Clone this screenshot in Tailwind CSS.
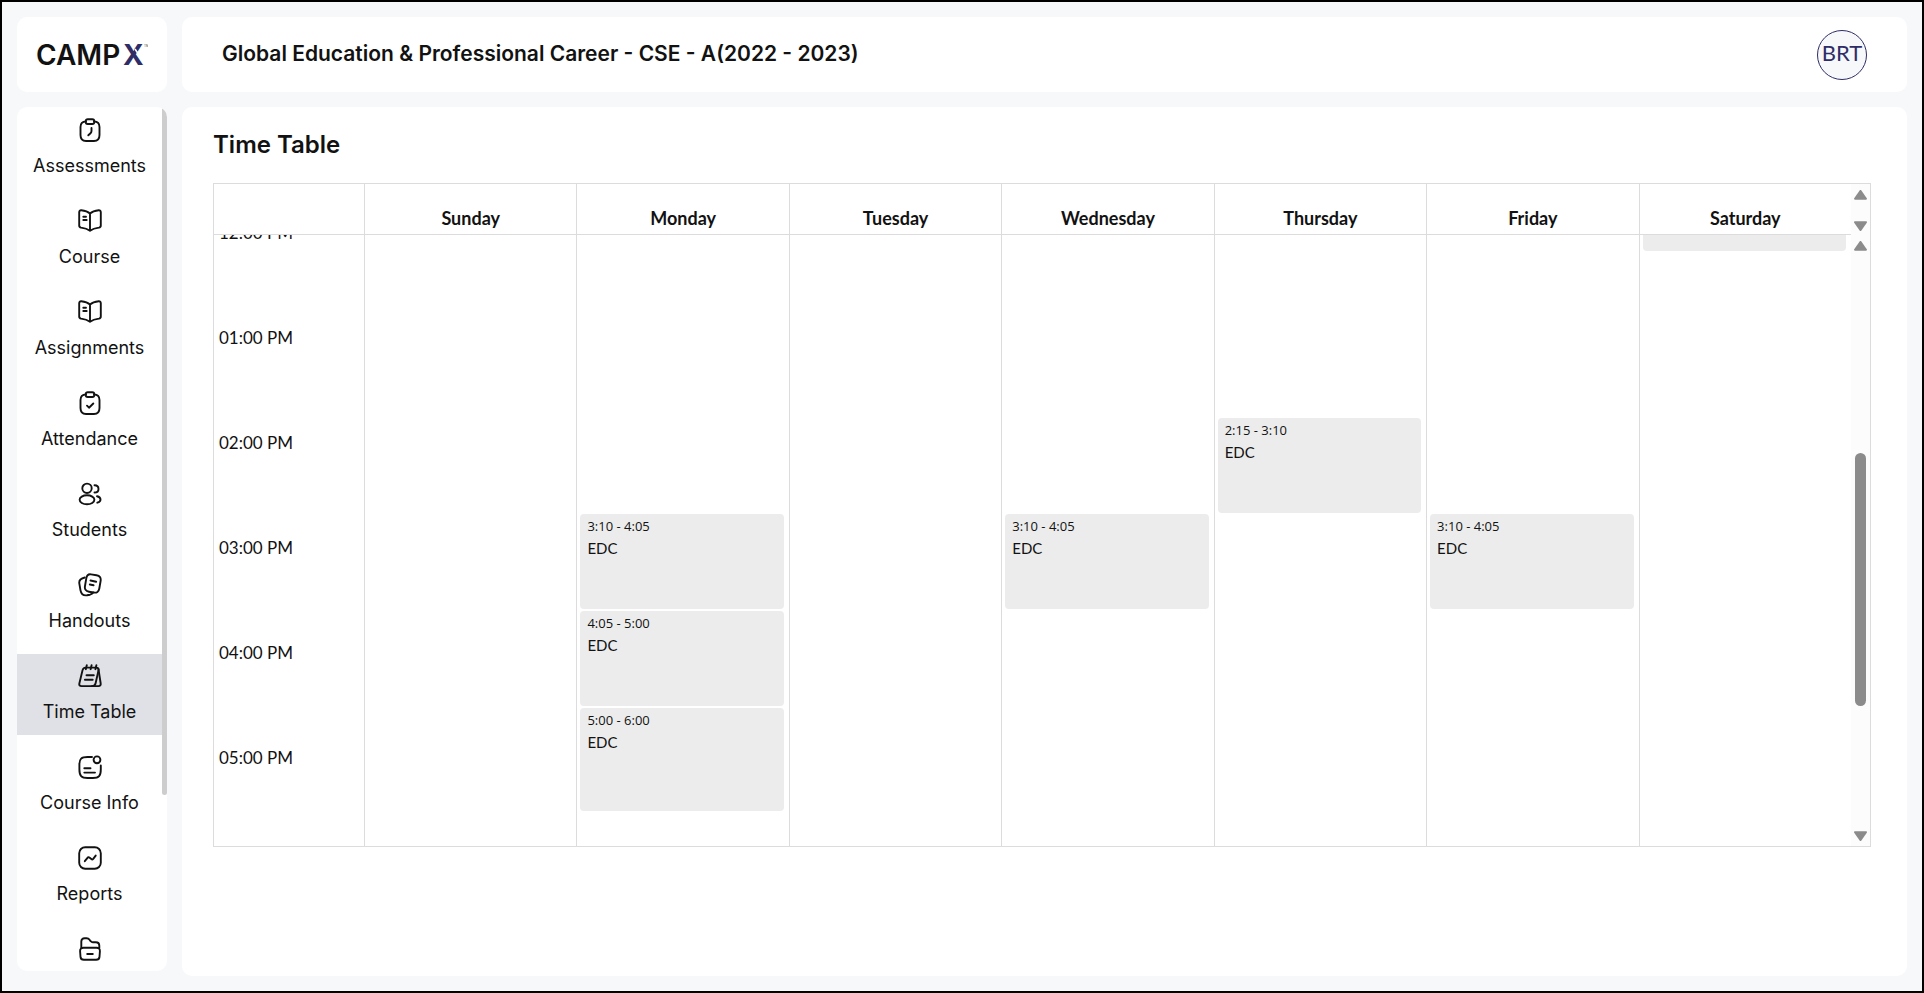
<!DOCTYPE html>
<html lang="en">
<head>
  <meta charset="UTF-8" />
  <meta name="viewport" content="width=device-width, initial-scale=1.0" />
  <title>CampX - Time Table</title>
  <script src="https://cdn.jsdelivr.net/npm/@tailwindcss/browser@4"></script>
</head>
<body class="h-screen flex flex-col gap-[15px] p-[15px] border-2 border-black bg-[#f7f8fa] text-[#121212] font-['Inter',sans-serif] overflow-hidden">

  <header class="flex gap-[15px] h-[75px] shrink-0">
    <a href="#" aria-label="CampX home" class="w-[150px] shrink-0 bg-white rounded-[10px] flex items-center justify-center">
      <svg class="w-28 h-11" viewBox="0 0 112 44" font-family="Inter, sans-serif" font-size="28" font-weight="600">
        <text x="0" y="32" fill="#121212">CAMP</text>
        <text x="87" y="32" fill="#2f2d68" font-weight="700">X</text>
        <path d="M99 16l8 12" stroke="#fff" stroke-width="1.5" />
        <text x="108" y="14" font-size="3" fill="#777">TM</text>
      </svg>
    </a>
    <div class="flex-1 min-w-0 bg-white rounded-[10px] px-10 flex items-center justify-between">
      <h1 class="text-[21px] leading-7 pb-0.5 font-semibold truncate">Global Education &amp; Professional Career - CSE - A(2022 - 2023)</h1>
      <button type="button" class="size-[50px] shrink-0 rounded-full border border-[#2f2d68] bg-[#f7f8fa] text-[#2f2d68] text-[22px] leading-6 pb-1 font-['Lato',sans-serif] flex items-center justify-center">BRT</button>
    </div>
  </header>

  <div class="flex-1 min-h-0 flex gap-[15px]">
    <aside class="w-[150px] shrink-0 mb-[5px] bg-white rounded-[10px] overflow-hidden flex">
      <nav class="flex-1 min-w-0 overflow-hidden flex flex-col gap-2.5 pt-px text-lg leading-[27px] whitespace-nowrap">
        <a href="#" class="h-[81px] shrink-0 pt-2.5 flex flex-col items-center gap-2.5">
          <svg class="size-6" viewBox="0 0 24 24" fill="none" stroke="currentColor" stroke-width="1.9" stroke-linecap="round" stroke-linejoin="round">
            <path d="M8 3.400C4.200 3.600 2.500 5 2.500 9v8c0 4.200 1.600 6 5.500 6h8c3.900 0 5.500-1.800 5.500-6V9c0-4-1.700-5.400-5.500-5.600" />
            <rect x="7.700" y="1.200" width="8.600" height="4.800" rx="2" />
            <path d="M13.500 10v3c0 1-.3 1.600-1 2.300L10.300 17.300" />
          </svg>
          Assessments
        </a>
        <a href="#" class="h-[81px] shrink-0 pt-2.5 flex flex-col items-center gap-2.5">
          <svg class="size-6" viewBox="0 0 24 24" fill="none" stroke="currentColor" stroke-width="1.9" stroke-linecap="round" stroke-linejoin="round">
            <path d="M12 4.500C9.800 2.600 6.500 1.700 3.300 1.300 2 1.200 1.200 1.900 1.200 3.200V16.500c0 1.200.7 1.900 1.900 2.100 3.200.4 6.400 1.300 8.900 3.100 2.500-1.800 5.700-2.700 8.900-3.100 1.200-.2 1.900-.9 1.900-2.100V3.200c0-1.300-.8-2-2.100-1.900C17.500 1.700 14.200 2.600 12 4.500zM12 4.500v17" />
            <path d="M5.300 7.800H8M5.300 11H8.700" />
          </svg>
          Course
        </a>
        <a href="#" class="h-[81px] shrink-0 pt-2.5 flex flex-col items-center gap-2.5">
          <svg class="size-6" viewBox="0 0 24 24" fill="none" stroke="currentColor" stroke-width="1.9" stroke-linecap="round" stroke-linejoin="round">
            <path d="M12 4.500C9.800 2.600 6.500 1.700 3.300 1.300 2 1.200 1.200 1.900 1.200 3.200V16.500c0 1.200.7 1.900 1.900 2.100 3.200.4 6.400 1.300 8.900 3.100 2.500-1.800 5.700-2.700 8.900-3.100 1.200-.2 1.900-.9 1.900-2.100V3.200c0-1.300-.8-2-2.100-1.900C17.500 1.700 14.200 2.600 12 4.500zM12 4.500v17" />
            <path d="M5.300 7.800H8M5.300 11H8.700" />
          </svg>
          Assignments
        </a>
        <a href="#" class="h-[81px] shrink-0 pt-2.5 flex flex-col items-center gap-2.5">
          <svg class="size-6" viewBox="0 0 24 24" fill="none" stroke="currentColor" stroke-width="1.9" stroke-linecap="round" stroke-linejoin="round">
            <path d="M8 3.400C4.200 3.600 2.500 5 2.500 9v8c0 4.200 1.600 6 5.500 6h8c3.900 0 5.500-1.800 5.500-6V9c0-4-1.700-5.400-5.500-5.600" />
            <rect x="7.700" y="1.200" width="8.600" height="4.800" rx="2" />
            <path d="M9 14.700l2 2 4.300-4.200" />
          </svg>
          Attendance
        </a>
        <a href="#" class="h-[81px] shrink-0 pt-2.5 flex flex-col items-center gap-2.5">
          <svg class="size-6" viewBox="0 0 24 24" fill="none" stroke="currentColor" stroke-width="1.9" stroke-linecap="round" stroke-linejoin="round">
            <circle cx="9" cy="6.300" r="4.700" />
            <ellipse cx="9" cy="17.800" rx="7.400" ry="4.500" />
            <path d="M16.500 3.300c2.400 0 4 1.500 4 3.600s-1.600 3.600-4 3.600M19 14.200c2.200.5 3.500 1.700 3.500 3.200s-1.200 2.700-3.200 3.300" />
          </svg>
          Students
        </a>
        <a href="#" class="h-[81px] shrink-0 pt-2.5 flex flex-col items-center gap-2.5">
          <svg class="size-6" viewBox="0 0 24 24" fill="none" stroke="currentColor" stroke-width="1.9" stroke-linecap="round" stroke-linejoin="round">
            <path d="M13 1.400l5.500.9c3.300.6 4.700 2.500 4.100 5.700l-1.300 7.500c-.6 3.300-2.500 4.600-5.700 4l-4.600-.8c-3.300-.6-4.600-2.500-4-5.700L8.300 5.400c.6-3.300 1.700-4.500 4.700-4z" />
            <path d="M6.800 4.500C3.200 5.300.8 6.900 1.300 10.300l1.200 7c.8 4.200 2.700 5.500 6.500 5l3-.6c1.500-.4 2.600-1.100 3.200-2.100" />
            <path d="M12.500 7.500l5.700 1.300M11.800 11.500l3.800.8" />
          </svg>
          Handouts
        </a>
        <a href="#" aria-current="page" class="h-[81px] shrink-0 pt-2.5 flex flex-col items-center gap-2.5 bg-[#e0e1e6]">
          <svg class="size-6" viewBox="0 0 24 24" fill="none" stroke="currentColor" stroke-width="1.9" stroke-linecap="round" stroke-linejoin="round">
            <path d="M7.500 3.600h10.800c1.800 0 2.600 1 2.200 2.800l-2.900 12.800c-.4 1.900-1.300 2.900-3.200 2.900H3.600c-1.900 0-2.700-1-2.200-2.900L4.500 6.400c.4-1.800 1.300-2.800 3-2.800z" />
            <path d="M20.500 5.500l2.200 14c.2 1.600-.6 2.600-2.200 2.600h-6.700M8.800 1.200l-1 4M13.600 1.200l-1 4M18.400 1.200l-1 4" />
            <path d="M8.500 11.200h7.300M6.900 15.700h7.800" />
          </svg>
          Time Table
        </a>
        <a href="#" class="h-[81px] shrink-0 pt-2.5 flex flex-col items-center gap-2.5">
          <svg class="size-6" viewBox="0 0 24 24" fill="none" stroke="currentColor" stroke-width="1.9" stroke-linecap="round" stroke-linejoin="round">
            <path d="M14 2H9.500C3.300 2 1.400 3.700 1.400 9.500v5C1.400 20.800 3.300 23 9.500 23h5.300c6.200 0 8-2.200 8-8.500v-4" />
            <circle cx="19" cy="4.800" r="3.400" />
            <path d="M6.300 13.300h6.200M6.300 17.600H17" />
          </svg>
          Course Info
        </a>
        <a href="#" class="h-[81px] shrink-0 pt-2.5 flex flex-col items-center gap-2.5">
          <svg class="size-6" viewBox="0 0 24 24" fill="none" stroke="currentColor" stroke-width="1.9" stroke-linecap="round" stroke-linejoin="round">
            <rect x="1.200" y="1.200" width="21.600" height="21.600" rx="6" />
            <path d="M6.800 15.200l2.700-3.400c.5-.6 1.300-.7 1.900-.2l1.900 1.500c.6.500 1.400.4 1.900-.2l2.500-3.300" />
          </svg>
          Reports
        </a>
        <a href="#" aria-label="Files" class="h-[81px] shrink-0 pt-2.5 flex flex-col items-center gap-2.5">
          <svg class="size-6" viewBox="0 0 24 24" fill="none" stroke="currentColor" stroke-width="1.9" stroke-linecap="round" stroke-linejoin="round">
            <path d="M3.300 11V4.500c0-2 1.200-3.300 3.300-3.300h2c1.500 0 2.100.4 3 1.600l1.200 1.500c.6.800 1 1 2 1h3c2.400 0 3.500 1.200 3.500 3.500V11" />
            <path d="M5.500 10.800h13c2.300 0 3.600 1.200 3.400 3.500l-.4 5.500c-.2 2-1.300 3-3.400 3H5.900c-2.100 0-3.200-1-3.400-3l-.4-5.500c-.2-2.300 1.100-3.500 3.400-3.500zM9.200 17h5.600" />
          </svg>
        </a>
      </nav>
      <!-- scroll thumb -->
      <div class="w-[5px] h-[688px] rounded-full bg-[#cdcdcd]"></div>
    </aside>

    <main class="flex-1 min-w-0 bg-white rounded-[10px] pl-[31px] pr-9 pt-[22px] overflow-hidden">
      <h2 class="text-2xl font-semibold mb-[22px]">Time Table</h2>

      <div class="flex border border-[#dcdcdc] font-['Lato',sans-serif]">
        <table class="flex-1 table-fixed w-full border-separate border-spacing-0">
          <thead>
            <tr class="h-[51px] text-lg leading-6 align-bottom">
              <td class="w-[150px] border-b border-[#dcdcdc]"></td>
              <th class="border-l border-b border-[#dcdcdc] pb-1">Sunday</th>
              <th class="border-l border-b border-[#dcdcdc] pb-1">Monday</th>
              <th class="border-l border-b border-[#dcdcdc] pb-1">Tuesday</th>
              <th class="border-l border-b border-[#dcdcdc] pb-1">Wednesday</th>
              <th class="border-l border-b border-[#dcdcdc] pb-1">Thursday</th>
              <th class="border-l border-b border-[#dcdcdc] pb-1">Friday</th>
              <th class="border-l border-b border-[#dcdcdc] pb-1">Saturday</th>
            </tr>
          </thead>
          <tbody>
            <tr class="align-top">
              <td>
                <div class="h-[611px] overflow-hidden pl-[5px] text-[17px] leading-6">
                  <div class="h-[105px] -mt-[14px]">12:00 PM</div>
                  <div class="h-[105px]">01:00 PM</div>
                  <div class="h-[105px]">02:00 PM</div>
                  <div class="h-[105px]">03:00 PM</div>
                  <div class="h-[105px]">04:00 PM</div>
                  <div class="h-[105px]">05:00 PM</div>
                </div>
              </td>
              <td class="border-l border-[#dcdcdc]"></td>
              <td class="border-l border-[#dcdcdc] pl-[3px] pr-[5px] pt-[279px]">
                <div class="flex flex-col gap-0.5">
                  <div class="h-[95px] rounded bg-[#ececec] px-[7px] pt-[3px]">
                    <p class="text-[13px] leading-[18px] font-['Open_Sans',sans-serif]">3:10 - 4:05</p>
                    <p class="text-[15px] leading-[26px]">EDC</p>
                  </div>
                  <div class="h-[95px] rounded bg-[#ececec] px-[7px] pt-[3px]">
                    <p class="text-[13px] leading-[18px] font-['Open_Sans',sans-serif]">4:05 - 5:00</p>
                    <p class="text-[15px] leading-[26px]">EDC</p>
                  </div>
                  <div class="h-[103px] rounded bg-[#ececec] px-[7px] pt-[3px]">
                    <p class="text-[13px] leading-[18px] font-['Open_Sans',sans-serif]">5:00 - 6:00</p>
                    <p class="text-[15px] leading-[26px]">EDC</p>
                  </div>
                </div>
              </td>
              <td class="border-l border-[#dcdcdc]"></td>
              <td class="border-l border-[#dcdcdc] pl-[3px] pr-[5px] pt-[279px]">
                <div class="h-[95px] rounded bg-[#ececec] px-[7px] pt-[3px]">
                  <p class="text-[13px] leading-[18px] font-['Open_Sans',sans-serif]">3:10 - 4:05</p>
                  <p class="text-[15px] leading-[26px]">EDC</p>
                </div>
              </td>
              <td class="border-l border-[#dcdcdc] pl-[3px] pr-[5px] pt-[183px]">
                <div class="h-[95px] rounded bg-[#ececec] px-[7px] pt-[3px]">
                  <p class="text-[13px] leading-[18px] font-['Open_Sans',sans-serif]">2:15 - 3:10</p>
                  <p class="text-[15px] leading-[26px]">EDC</p>
                </div>
              </td>
              <td class="border-l border-[#dcdcdc] pl-[3px] pr-[5px] pt-[279px]">
                <div class="h-[95px] rounded bg-[#ececec] px-[7px] pt-[3px]">
                  <p class="text-[13px] leading-[18px] font-['Open_Sans',sans-serif]">3:10 - 4:05</p>
                  <p class="text-[15px] leading-[26px]">EDC</p>
                </div>
              </td>
              <td class="border-l border-[#dcdcdc] pl-[3px] pr-[5px]">
                <div class="h-4 rounded-b bg-[#ececec]"></div>
              </td>
            </tr>
          </tbody>
        </table>

        <!-- scrollbars: header row, then body -->
        <div class="w-[19px] shrink-0 bg-[#fcfcfc] flex flex-col text-[#8b8b8b]">
          <div class="h-[51px] pt-1.5 pb-1 flex flex-col items-center justify-between">
            <svg class="w-[13px] h-2.5" viewBox="0 0 12 10" preserveAspectRatio="none" fill="currentColor"><path d="M5 .7a1.200 1.200 0 0 1 2 0l4.800 7.600c.4.700 0 1.500-.8 1.500H1c-.8 0-1.200-.8-.8-1.500z" /></svg>
            <svg class="w-[13px] h-2.5" viewBox="0 0 12 10" preserveAspectRatio="none" fill="currentColor"><path d="M5 9.300a1.200 1.200 0 0 0 2 0l4.800-7.600C12.200 1 11.800.2 11 .2H1C.2.200-.2 1 .2 1.700z" /></svg>
          </div>
          <div class="flex-1 pt-1.5 pb-[5px] flex flex-col items-center justify-between">
            <svg class="w-[13px] h-2.5" viewBox="0 0 12 10" preserveAspectRatio="none" fill="currentColor"><path d="M5 .7a1.200 1.200 0 0 1 2 0l4.800 7.600c.4.700 0 1.500-.8 1.500H1c-.8 0-1.200-.8-.8-1.500z" /></svg>
            <div class="flex-1 pt-[202px]">
              <div class="w-[11px] h-[253px] rounded-full bg-[#8b8b8b]"></div>
            </div>
            <svg class="w-[13px] h-2.5" viewBox="0 0 12 10" preserveAspectRatio="none" fill="currentColor"><path d="M5 9.300a1.200 1.200 0 0 0 2 0l4.800-7.600C12.200 1 11.800.2 11 .2H1C.2.200-.2 1 .2 1.700z" /></svg>
          </div>
        </div>
      </div>
    </main>
  </div>

</body>
</html>
